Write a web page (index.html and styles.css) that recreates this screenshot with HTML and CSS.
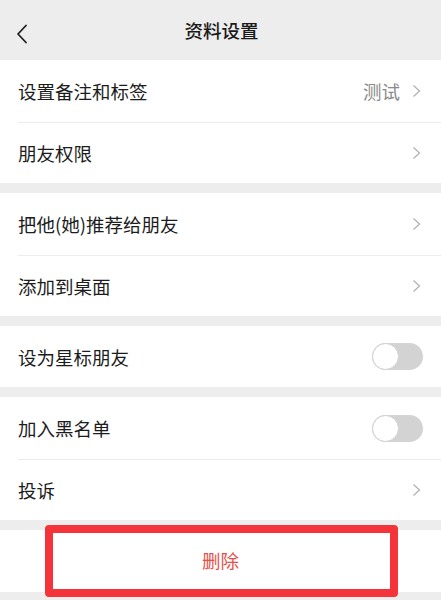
FILE: index.html
```html
<!DOCTYPE html>
<html lang="zh-CN">
<head>
<meta charset="utf-8">
<title>资料设置</title>
<link rel="stylesheet" href="styles.css">
</head>
<body>
<div class="page">
  <header class="topbar">
    <svg class="back" width="12" height="20" viewBox="0 0 12 20"><path d="M10 1.5 L2 10 L10 18.5" fill="none" stroke="#1f1f1f" stroke-width="1.8" stroke-linecap="round" stroke-linejoin="round"/></svg>
    <div class="title">资料设置</div>
  </header>

  <section class="group">
    <div class="row"><span class="label">设置备注和标签</span><span class="value">测试</span><svg class="chev" width="9" height="14" viewBox="0 0 9 14"><path d="M1.5 1.5 L7.5 7 L1.5 12.5" fill="none" stroke="#b3b3b3" stroke-width="1.3"/></svg></div>
    <div class="row"><span class="label">朋友权限</span><svg class="chev" width="9" height="14" viewBox="0 0 9 14"><path d="M1.5 1.5 L7.5 7 L1.5 12.5" fill="none" stroke="#b3b3b3" stroke-width="1.3"/></svg></div>
  </section>

  <section class="group">
    <div class="row"><span class="label">把他(她)推荐给朋友</span><svg class="chev" width="9" height="14" viewBox="0 0 9 14"><path d="M1.5 1.5 L7.5 7 L1.5 12.5" fill="none" stroke="#b3b3b3" stroke-width="1.3"/></svg></div>
    <div class="row"><span class="label">添加到桌面</span><svg class="chev" width="9" height="14" viewBox="0 0 9 14"><path d="M1.5 1.5 L7.5 7 L1.5 12.5" fill="none" stroke="#b3b3b3" stroke-width="1.3"/></svg></div>
  </section>

  <section class="group">
    <div class="row single"><span class="label">设为星标朋友</span><span class="toggle"><span class="knob"></span></span></div>
  </section>

  <section class="group">
    <div class="row"><span class="label">加入黑名单</span><span class="toggle"><span class="knob"></span></span></div>
    <div class="row"><span class="label">投诉</span><svg class="chev" width="9" height="14" viewBox="0 0 9 14"><path d="M1.5 1.5 L7.5 7 L1.5 12.5" fill="none" stroke="#b3b3b3" stroke-width="1.3"/></svg></div>
  </section>

  <section class="group delete-group">
    <div class="delete">删除</div>
    <div class="highlight"></div>
  </section>
</div>
</body>
</html>
```

FILE: styles.css
```css
*, *::before, *::after {
  box-sizing: border-box;
}
html, body {
  margin: 0;
  padding: 0;
}
body {
  background: #ededed;
  font-family: "Noto Sans CJK SC", "Noto Sans", sans-serif;
  color: #1c1c1c;
}
.page {
  width: 441px;
  height: 600px;
  overflow: hidden;
  background: #ededed;
}
.topbar {
  height: 60px;
  display: flex;
  align-items: center;
  justify-content: center;
  position: relative;
}
.back {
  position: absolute;
  left: 16px;
  top: 24px;
}
.title {
  font-size: 18.5px;
  font-weight: 500;
  color: #1a1a1a;
  margin-left: 2px;
}
.group {
  background: #fff;
  margin-bottom: 10px;
}
.row {
  height: 61px;
  display: flex;
  align-items: center;
  padding: 0 20px 0 0;
  margin-left: 18px;
  font-size: 18.5px;
  border-top: 1px solid #ececec;
}
.row:first-child {
  border-top: none;
  height: 62px;
}
.row.single {
  height: 61px;
}
.label {
  flex: 1;
  color: #1c1c1c;
}
.value {
  color: #8a8a8a;
  margin-right: 12px;
}
.chev {
  display: block;
}
.toggle {
  width: 51px;
  height: 27px;
  border-radius: 14px;
  background: #d3d3d3;
  position: relative;
  margin-right: -2px;
}
.knob {
  position: absolute;
  left: 0;
  top: 0;
  width: 27px;
  height: 27px;
  border-radius: 50%;
  background: #fff;
  border: 1px solid #d0d0d0;
}
.delete-group {
  position: relative;
  height: 62px;
  display: flex;
  align-items: center;
  justify-content: center;
}
.delete {
  font-size: 18.5px;
  color: #e6504c;
  margin-top: -2px;
}
.highlight {
  position: absolute;
  left: 45px;
  top: -5px;
  width: 353px;
  height: 72px;
  border: 8px solid #f5333a;
  border-radius: 4px;
}
```
